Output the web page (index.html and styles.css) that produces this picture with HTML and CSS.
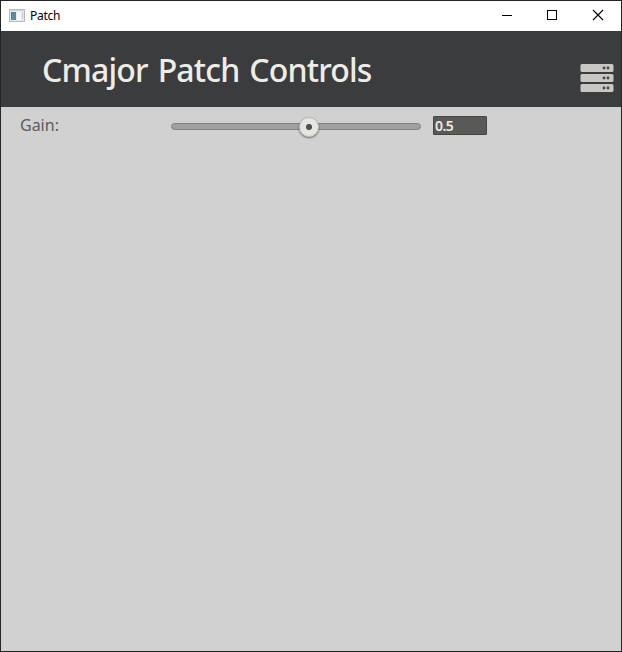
FILE: index.html
```
<!DOCTYPE html>
<html lang="en">
<head>
<meta charset="utf-8">
<title>Patch</title>
<link rel="stylesheet" href="styles.css">
</head>
<body>
<div class="window">
  <div class="titlebar">
    <svg class="app-icon" width="16" height="14" viewBox="0 0 16 14">
      <rect x=".5" y=".5" width="15" height="12" fill="#e9ecee" stroke="#b5babd"/>
      <path d="M1 1.5h14" stroke="#d0d5d8"/>
      <rect x="2" y="3" width="5" height="8" fill="#4d9298"/>
      <path d="M2 3h3l-3 5z" fill="#4c7fb0"/>
      <rect x="8" y="3" width="4" height="8" fill="#f8f8f8"/>
      <path d="M13.5 3v7" stroke="#c4c9cc"/>
    </svg>
    <span class="caption">Patch</span>
    <div class="buttons">
      <svg width="46" height="30" viewBox="0 0 46 30"><path d="M19 14.5h10" stroke="#000"/></svg>
      <svg width="46" height="30" viewBox="0 0 46 30"><rect x="18.5" y="9.5" width="9" height="9" fill="none" stroke="#000"/></svg>
      <svg width="46" height="30" viewBox="0 0 46 30"><path d="M18 9l10 10M28 9L18 19" stroke="#000" stroke-width="1.1"/></svg>
    </div>
  </div>
  <header class="header">
    <h1 class="title">Cmajor Patch Controls</h1>
    <svg class="rack" width="34" height="30" viewBox="0 0 34 30">
      <g fill="#c9c7c4">
        <rect x=".5" y="1" width="33" height="8" rx="1.5"/>
        <rect x=".5" y="11" width="33" height="8" rx="1.5"/>
        <rect x=".5" y="21" width="33" height="8" rx="1.5"/>
      </g>
      <g fill="#454545">
        <circle cx="24" cy="5" r="1.4"/><circle cx="28" cy="5" r="1.4"/>
        <circle cx="24" cy="15" r="1.4"/><circle cx="28" cy="15" r="1.4"/>
        <circle cx="24" cy="25" r="1.4"/><circle cx="28" cy="25" r="1.4"/>
      </g>
    </svg>
  </header>
  <main class="controls">
    <span class="label">Gain:</span>
    <div class="slider"><div class="thumb"></div></div>
    <div class="value">0.5</div>
  </main>
</div>
</body>
</html>
```
FILE: styles.css
```
* { box-sizing: border-box; }
body { margin: 0; }
.window {
  width: 622px;
  height: 652px;
  display: flex;
  flex-direction: column;
  border: 1px solid #252528;
  background: #d1d1d1;
  font-family: "Noto Sans", "Open Sans", sans-serif;
}
.titlebar {
  height: 30px;
  display: flex;
  align-items: center;
  padding-left: 8px;
  background: #fff;
}
.caption {
  margin-left: 5px;
  font-size: 12px;
  line-height: 16px;
  letter-spacing: -0.3px;
  color: #000;
}
.buttons { display: flex; margin-left: auto; }
.header {
  height: 76px;
  display: flex;
  align-items: center;
  justify-content: space-between;
  padding: 0 7px 0 41px;
  background: #3b3c3d;
}
.title {
  margin: 2px 0 0;
  font-size: 32px;
  font-weight: 500;
  line-height: 44px;
  letter-spacing: -0.82px;
  word-spacing: 2.4px;
  white-space: nowrap;
  color: #eeece6;
}
.rack { margin-top: 17px; }
.controls {
  height: 38px;
  display: flex;
  align-items: center;
  padding-left: 18px;
}
.label {
  width: 152px;
  margin-top: -2px;
  padding-left: 1px;
  font-size: 16px;
  line-height: 22px;
  color: #5c5c5c;
}
.slider {
  width: 250px;
  height: 7px;
  display: flex;
  align-items: center;
  padding-left: 127px;
  border: 1px solid #828282;
  border-radius: 4px;
  background: #a0a09f;
}
.thumb {
  width: 20px;
  height: 20px;
  flex: none;
  margin-top: 1px;
  border: 1px solid #bdbdbb;
  border-radius: 50%;
  background: radial-gradient(circle, #515151 0 2.7px, #e6e5e1 3.5px);
  box-shadow: 0 1px 2px rgba(0, 0, 0, .55);
}
.value {
  width: 54px;
  height: 19px;
  margin: -2px 0 0 12px;
  padding-left: 1px;
  border: 1px solid #454545;
  border-radius: 1px;
  background: #595957;
  color: #eeece6;
  font-size: 14px;
  font-weight: 600;
  letter-spacing: -0.5px;
  line-height: 17px;
}
```
